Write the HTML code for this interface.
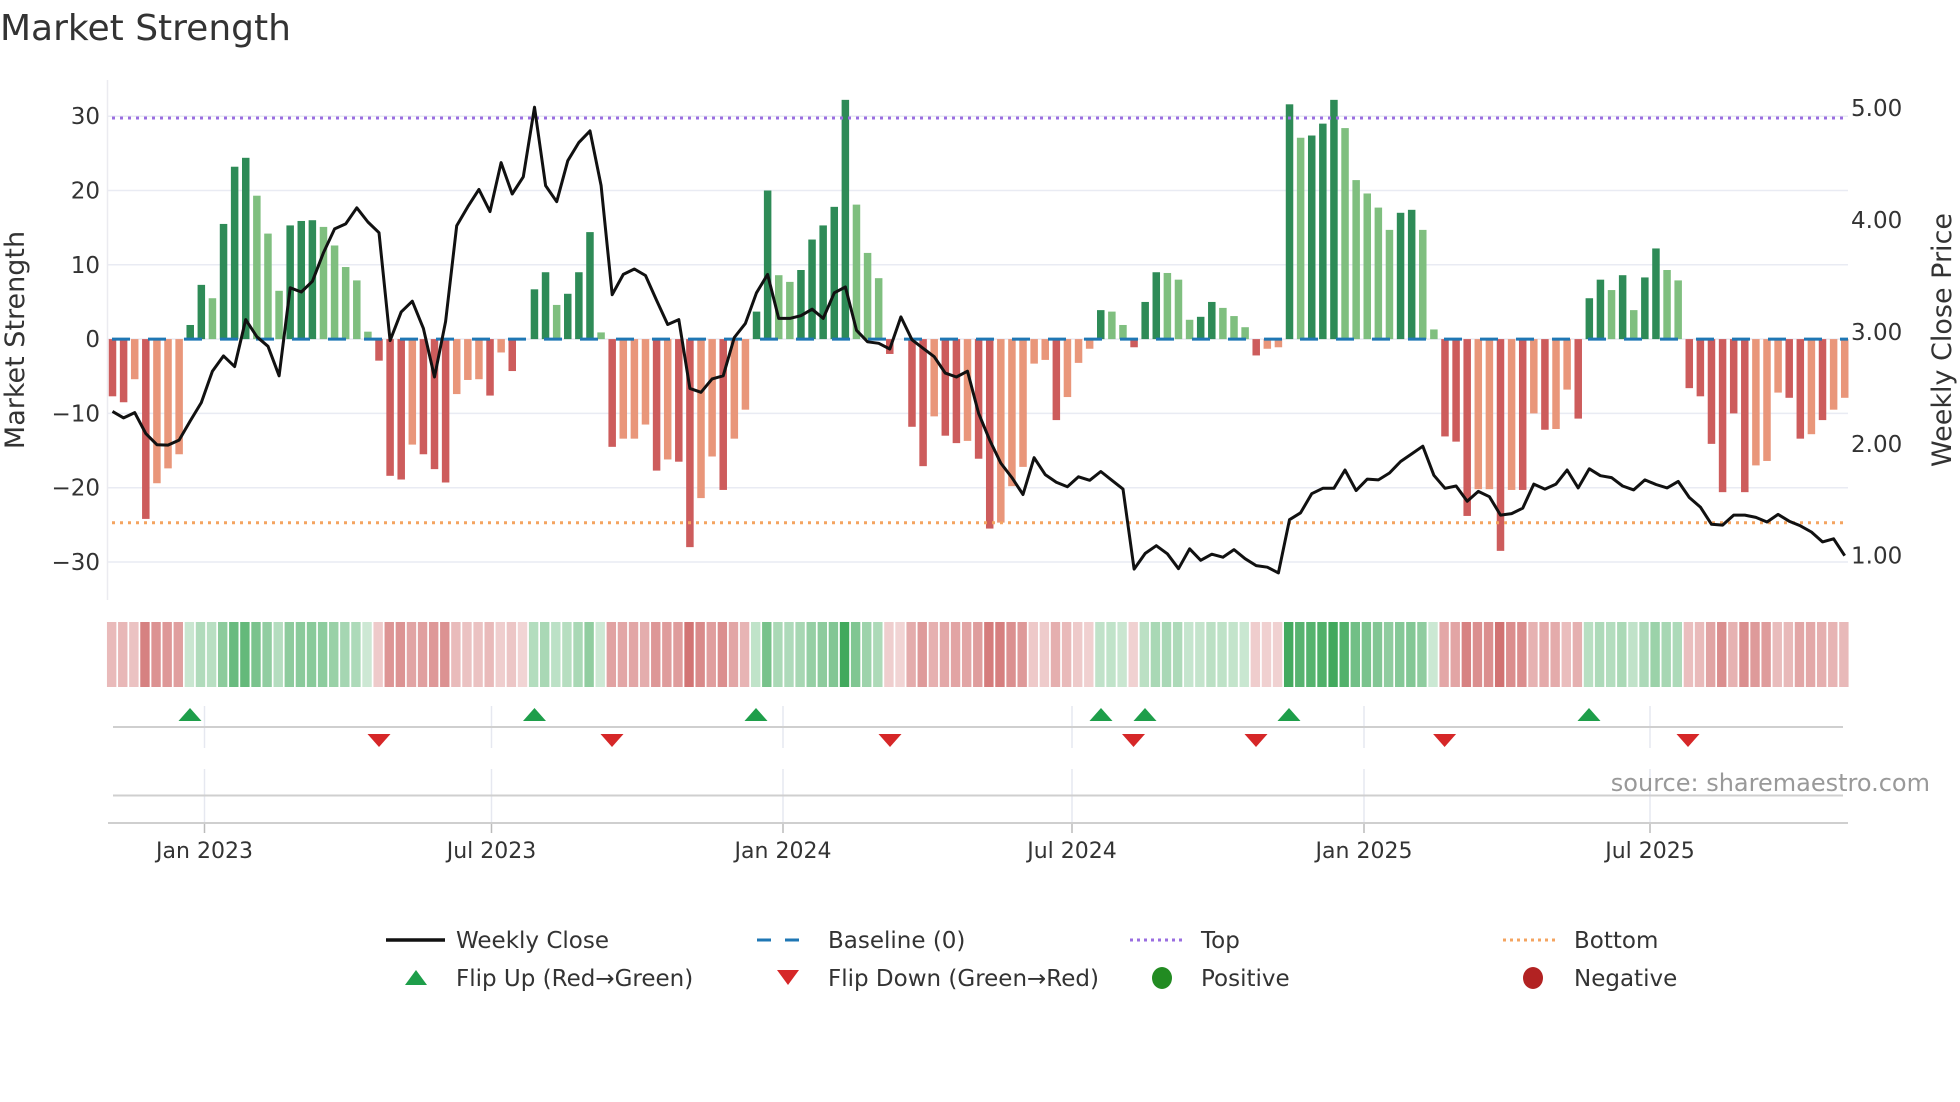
<!DOCTYPE html>
<html><head><meta charset="utf-8"><style>
html,body{margin:0;padding:0;background:#fff;}
svg{display:block;font-family:"DejaVu Sans","Liberation Sans",sans-serif;}
</style></head><body>
<svg id="s" width="1960" height="1102" viewBox="0 0 1960 1102" xmlns="http://www.w3.org/2000/svg">
<rect width="1960" height="1102" fill="#fff"/>
<text x="0" y="40" font-size="36" fill="#333">Market Strength</text>
<g id="grid" stroke="#e9ebf3" stroke-width="1.5"></g>
<line x1="107.5" y1="80" x2="107.5" y2="600" stroke="#ebebf0" stroke-width="1.5"/>
<g id="bars"></g>
<line x1="112" y1="339.1" x2="1848" y2="339.1" stroke="#1f77b4" stroke-width="3" stroke-dasharray="18,18"/>
<line x1="112" y1="118" x2="1848" y2="118" stroke="#9a6ee0" stroke-width="3" stroke-dasharray="3,5"/>
<line x1="112" y1="522.8" x2="1848" y2="522.8" stroke="#f4a460" stroke-width="3" stroke-dasharray="3,5"/>
<polyline id="pl" fill="none" stroke="#111" stroke-width="3" stroke-linejoin="round"/>
<g id="lt" font-size="23" fill="#333" text-anchor="end"></g>
<g id="rt" font-size="23" fill="#333"></g>
<text transform="translate(24,340) rotate(-90)" font-size="27" fill="#333" text-anchor="middle">Market Strength</text>
<text transform="translate(1951,340) rotate(-90)" font-size="27" fill="#333" text-anchor="middle">Weekly Close Price</text>
<g id="heat"></g>
<g id="vg" stroke="#e6e8f0" stroke-width="1.5"></g>
<line x1="113" y1="727" x2="1843" y2="727" stroke="#cfcfcf" stroke-width="2"/>
<line x1="113" y1="795.5" x2="1843" y2="795.5" stroke="#cfcfcf" stroke-width="2"/>
<line x1="108" y1="823" x2="1848" y2="823" stroke="#cfcfcf" stroke-width="2"/>
<g id="mk"></g>
<g id="xt" font-size="22" fill="#333" text-anchor="middle"></g>
<text x="1930" y="791" font-size="24" fill="#999" text-anchor="end">source: sharemaestro.com</text>
<g font-size="23" fill="#333">
<line x1="386" y1="940" x2="445" y2="940" stroke="#111" stroke-width="3.5"/>
<text x="456" y="948">Weekly Close</text>
<line x1="757" y1="940" x2="813" y2="940" stroke="#1f77b4" stroke-width="3" stroke-dasharray="14,14"/>
<text x="828" y="948">Baseline (0)</text>
<line x1="1130" y1="940" x2="1184" y2="940" stroke="#9a6ee0" stroke-width="3" stroke-dasharray="3,4"/>
<text x="1201" y="948">Top</text>
<line x1="1503" y1="940" x2="1557" y2="940" stroke="#f4a460" stroke-width="3" stroke-dasharray="3,4"/>
<text x="1574" y="948">Bottom</text>
<polygon points="405,985 427,985 416,970" fill="#1e9e4a"/>
<text x="456" y="986">Flip Up (Red→Green)</text>
<polygon points="777,970 799,970 788,985" fill="#d62728"/>
<text x="828" y="986">Flip Down (Green→Red)</text>
<ellipse cx="1162" cy="978" rx="10" ry="11" fill="#228b22"/>
<text x="1201" y="986">Positive</text>
<ellipse cx="1533" cy="978" rx="10" ry="11" fill="#b22222"/>
<text x="1574" y="986">Negative</text>
</g>
</svg>
<script>
var NS="http://www.w3.org/2000/svg";
function el(p,t,a,txt){var e=document.createElementNS(NS,t);for(var k in a)e.setAttribute(k,a[k]);if(txt!=null)e.textContent=txt;document.getElementById(p).appendChild(e);return e;}
var V=[[-7.7,1],[-8.5,1],[-5.4,0],[-24.2,1],[-19.4,0],[-17.4,0],[-15.5,0],[1.9,1],[7.3,1],[5.5,0],[15.5,1],[23.2,1],[24.4,1],[19.3,0],[14.2,0],[6.5,0],[15.3,1],[15.9,1],[16,1],[15.1,0],[12.6,0],[9.7,0],[7.9,0],[1,0],[-2.9,1],[-18.4,1],[-18.9,1],[-14.2,0],[-15.5,1],[-17.5,1],[-19.3,1],[-7.4,0],[-5.5,0],[-5.4,0],[-7.6,1],[-1.8,0],[-4.3,1],[0,0],[6.7,1],[9,1],[4.6,0],[6.1,1],[9,1],[14.4,1],[0.9,0],[-14.5,1],[-13.4,0],[-13.4,0],[-11.5,0],[-17.7,1],[-16.2,0],[-16.5,1],[-28,1],[-21.4,0],[-15.8,0],[-20.3,1],[-13.4,0],[-9.5,0],[3.7,1],[20,1],[8.6,0],[7.7,0],[9.3,1],[13.4,1],[15.3,1],[17.8,1],[32.2,1],[18.1,0],[11.6,0],[8.2,0],[-2,1],[0,0],[-11.8,1],[-17.1,1],[-10.4,0],[-13,1],[-14,1],[-13.7,0],[-16.1,1],[-25.5,1],[-24.7,0],[-19.8,0],[-17.2,0],[-3.3,0],[-2.8,0],[-10.9,1],[-7.8,0],[-3.2,0],[-1.3,0],[3.9,1],[3.7,0],[1.9,0],[-1.1,1],[5,1],[9,1],[8.9,0],[8,0],[2.6,0],[3,1],[5,1],[4.2,0],[3.1,0],[1.6,0],[-2.2,1],[-1.3,0],[-1.1,0],[31.6,1],[27.1,0],[27.4,1],[29,1],[32.2,1],[28.4,0],[21.4,0],[19.6,0],[17.7,0],[14.7,0],[17,1],[17.4,1],[14.7,0],[1.3,0],[-13.1,1],[-13.8,1],[-23.8,1],[-20.2,0],[-20.2,0],[-28.5,1],[-20.3,0],[-20.3,1],[-10,0],[-12.2,1],[-12.1,0],[-6.8,0],[-10.7,1],[5.5,1],[8,1],[6.6,0],[8.6,1],[3.9,0],[8.3,1],[12.2,1],[9.3,0],[7.9,0],[-6.6,1],[-7.7,1],[-14.1,1],[-20.6,1],[-10,1],[-20.6,1],[-17,0],[-16.4,0],[-7.2,0],[-7.9,1],[-13.4,1],[-12.8,0],[-10.9,1],[-9.5,0],[-7.9,0]];
var L=[1075,1092,1078,1133,1162,1163,1150,1100,1052,970,930,958,835,880,905,982,752,763,735,660,598,585,543,580,608,890,815,787,858,985,840,590,540,495,553,425,507,462,280,485,527,420,372,342,485,770,717,703,720,785,848,835,1015,1025,990,982,882,845,765,717,832,832,825,808,832,765,750,863,893,897,912,828,888,910,932,975,985,970,1080,1150,1210,1248,1292,1196,1240,1260,1272,1246,1255,1232,1255,1278,1487,1446,1426,1447,1486,1434,1464,1448,1456,1436,1460,1478,1482,1497,1358,1340,1290,1276,1276,1228,1282,1252,1254,1236,1206,1186,1166,1242,1276,1270,1310,1284,1298,1346,1342,1328,1265,1278,1265,1228,1275,1225,1243,1248,1270,1280,1254,1266,1275,1258,1300,1325,1370,1372,1346,1346,1352,1364,1344,1362,1374,1390,1416,1408,1452];
function X(i){return 112.5+i*11.104;}
var Y0=339.1,K=7.43;
[30,20,10,0,-10,-20,-30].forEach(function(v){var y=Y0-K*v;
 el("grid","line",{x1:108,y1:y,x2:1848,y2:y});
 el("lt","text",{x:100,y:y+8},(v<0?"\u2212"+(-v):""+v));});
[5,4,3,2,1].forEach(function(p){var y=555.7-(p-1)*111.95;el("rt","text",{x:1851,y:y+8},p.toFixed(2));});
var pts=[];
V.forEach(function(d,i){var v=d[0],x=X(i),y=Y0-K*v;
 var c=v>=0?(d[1]?"#2e8b57":"#7fbf7f"):(d[1]?"#cd5c5c":"#e9967a");
 if(v!==0)el("bars","rect",{x:x-3.75,y:Math.min(y,Y0),width:7.5,height:Math.abs(y-Y0),fill:c});
 var t=Math.min(Math.abs(v)/32,1);
 var f=v>0?"rgba(45,160,75,"+(0.22+0.68*t).toFixed(3)+")":"rgba(200,85,85,"+(0.25+0.65*t).toFixed(3)+")";
 el("heat","rect",{x:x-5.55,y:622,width:9.4,height:65,fill:f});
 pts.push(x.toFixed(1)+","+(L[i]/2.613).toFixed(1));});
document.getElementById("pl").setAttribute("points",pts.join(" "));
var XT=[[204.5,"Jan 2023"],[491.5,"Jul 2023"],[783,"Jan 2024"],[1072,"Jul 2024"],[1364,"Jan 2025"],[1650,"Jul 2025"]];
XT.forEach(function(t){el("vg","line",{x1:t[0],y1:706,x2:t[0],y2:748});el("vg","line",{x1:t[0],y1:769,x2:t[0],y2:823});
 el("vg","line",{x1:t[0],y1:823,x2:t[0],y2:833,stroke:"#bbb"});
 el("xt","text",{x:t[0],y:858},t[1]);});
[190,534.5,756,1101,1145,1289,1589].forEach(function(x){el("mk","polygon",{points:(x-11.5)+",721 "+(x+11.5)+",721 "+x+",708",fill:"#1e9e4a"});});
[379,612,890,1133.5,1256,1444.6,1688].forEach(function(x){el("mk","polygon",{points:(x-11.5)+",734 "+(x+11.5)+",734 "+x+",747",fill:"#d62728"});});
</script>
</body></html>
